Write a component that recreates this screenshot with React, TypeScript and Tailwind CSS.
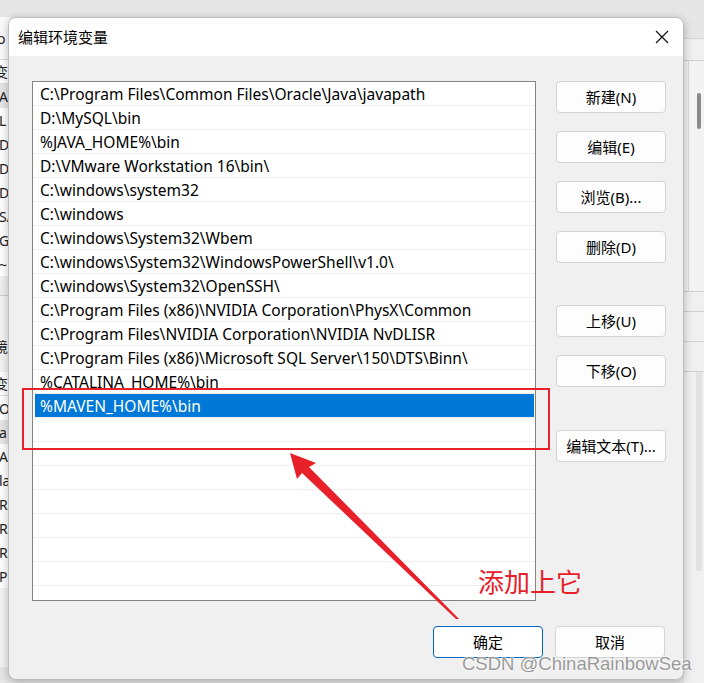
import React from "react";

const paths = [
  "C:\\Program Files\\Common Files\\Oracle\\Java\\javapath",
  "D:\\MySQL\\bin",
  "%JAVA_HOME%\\bin",
  "D:\\VMware Workstation 16\\bin\\",
  "C:\\windows\\system32",
  "C:\\windows",
  "C:\\windows\\System32\\Wbem",
  "C:\\windows\\System32\\WindowsPowerShell\\v1.0\\",
  "C:\\windows\\System32\\OpenSSH\\",
  "C:\\Program Files (x86)\\NVIDIA Corporation\\PhysX\\Common",
  "C:\\Program Files\\NVIDIA Corporation\\NVIDIA NvDLISR",
  "C:\\Program Files (x86)\\Microsoft SQL Server\\150\\DTS\\Binn\\",
  "%CATALINA_HOME%\\bin",
  "%MAVEN_HOME%\\bin",
];

const font = { fontFamily: '"Noto Sans", "Noto Sans CJK SC", sans-serif' };

function Btn({ label, primary }: { label: string; primary?: boolean }) {
  return (
    <div
      className={
        "w-[110px] h-[32px] rounded-[4px] flex items-center justify-center text-[15px] text-black " +
        (primary ? "bg-white border border-[#0067c0]" : "bg-[#fdfdfd] border border-[#d4d4d4]")
      }
    >
      {label}
    </div>
  );
}

const leftA = ["AP", "L", "DA", "DA", "DE", "SA", "GC", "~"];
const leftB = ["OS", "a", "A", "la", "R", "R", "R", "P"];

export default function App() {
  const rows = Array.from({ length: 22 }, (_, i) => paths[i] ?? "");
  return (
    <div className="relative w-[704px] h-[683px] overflow-hidden bg-[#e6e6e6]" style={font}>
      {/* background window fragments, left */}
      <div className="absolute left-0 top-[17px] w-[10px] h-[650px] overflow-hidden bg-[#f3f3f3] text-[14px] text-[#222]">
        <div className="h-[43px] bg-[#fafafa] border-b border-[#d8d8d8] flex items-center -ml-[3px]">o</div>
        <div className="h-[24px] flex items-center -ml-[6px] border-b border-[#e0e0e0] bg-white">变</div>
        <div className="bg-white">
          {leftA.map((t, i) => (
            <div key={i} className={"h-[24px] flex items-center -ml-[1px] " + (i === 0 ? "bg-[#e5e5e5]" : "")}>{t}</div>
          ))}
        </div>
        <div className="h-[20px] bg-[#f0f0f0] border-b border-[#d0d0d0]" />
        <div className="h-[38px]" />
        <div className="h-[24px] flex items-center -ml-[6px]">境</div>
        <div className="h-[14px]" />
        <div className="h-[24px] flex items-center -ml-[6px] bg-white border-b border-[#e0e0e0]">变</div>
        <div className="bg-white">
          {leftB.map((t, i) => (
            <div key={i} className={"h-[24px] flex items-center -ml-[1px] " + (i === 1 ? "bg-[#e5e5e5]" : "")}>{t}</div>
          ))}
        </div>
      </div>

      {/* background window fragments, right */}
      <div className="absolute left-[684px] top-[38px] w-[20px] h-[645px] bg-[#f0f0f0] border-t border-[#d6d6d6]">
        <div className="h-[22px] border-b border-[#d0d0d0]" />
        <div className="flex h-[230px]">
          <div className="w-[4px]" />
          <div className="w-[6px] bg-[#f7f7f7] border-l border-[#dcdcdc]" />
          <div className="w-[10px] bg-[#f3f3f3] pt-[32px] pl-[3px]">
            <div className="w-[4px] h-[36px] bg-[#8a8a8a] rounded-sm" />
          </div>
        </div>
        <div className="h-[20px] border-t border-[#d0d0d0]" />
        <div className="h-[30px] border-t border-[#d0d0d0]" />
        <div className="h-[30px] border-t border-[#d0d0d0]" />
        <div className="h-[200px] border-t border-[#d0d0d0] flex">
          <div className="w-[12px]" />
          <div className="w-[6px] bg-[#e2e2e2]" />
        </div>
      </div>

      {/* dialog window */}
      <div className="absolute left-[8px] top-[17px] w-[676px] h-[663px] rounded-[8px] overflow-hidden bg-[#f0f0f0] shadow-[0_2px_10px_rgba(0,0,0,0.25)] border border-[#bdbdbd]">
        <div className="h-[38px] bg-white flex items-center justify-between pl-[9px] pr-[14px]">
          <span className="text-[15px] text-black">编辑环境变量</span>
          <svg width="14" height="14" viewBox="0 0 14 14">
            <path d="M1 1 L13 13 M13 1 L1 13" stroke="#111" strokeWidth="1.2" fill="none" />
          </svg>
        </div>
        <div className="flex pl-[23px] pt-[25px]">
          <div className="w-[504px] h-[520px] bg-white border border-[#848484] overflow-hidden">
            {rows.map((t, i) => {
              const sel = i === 13;
              return (
                <div key={i} className="h-[24px] border-b border-[#efefef] flex">
                  <div
                    className={
                      "flex-1 flex items-center pt-[2px] text-[15.5px] whitespace-nowrap " +
                      (sel ? "bg-[#0078d7] text-white ml-[2px] mr-[1px] pl-[5px]" : "text-black pl-[7px]")
                    }
                  >
                    {t}
                  </div>
                </div>
              );
            })}
          </div>
          <div className="ml-[20px] flex flex-col">
            <div className="flex flex-col gap-[18px]">
              <Btn label="新建(N)" />
              <Btn label="编辑(E)" />
              <Btn label="浏览(B)..." />
              <Btn label="删除(D)" />
            </div>
            <div className="flex flex-col gap-[18px] mt-[42px]">
              <Btn label="上移(U)" />
              <Btn label="下移(O)" />
            </div>
            <div className="mt-[43px]">
              <Btn label="编辑文本(T)..." />
            </div>
          </div>
        </div>
        <div className="flex justify-end gap-[12px] pr-[18px] mt-[25px]">
          <Btn label="确定" primary />
          <Btn label="取消" />
        </div>
      </div>

      {/* annotation: red box */}
      <div className="absolute left-[22px] top-[388px] w-[528px] h-[62px] border-2 border-[#e8202a]" />

      {/* annotation: arrow */}
      <svg className="absolute left-0 top-0" width="704" height="683" viewBox="0 0 704 683">
        <polygon
          points="290,453 316,463 309,467 459,619 456,619 302,473 297,479"
          fill="#e8202a"
        />
      </svg>

      {/* annotation text */}
      <div
        className="absolute left-[478px] top-[568px] text-[26px] leading-none text-[#e8202a]"
        style={{ fontFamily: '"Noto Sans CJK SC", sans-serif' }}
      >
        添加上它
      </div>

      {/* watermark */}
      <div
        className="absolute left-[462px] top-[655px] text-[18.5px] leading-none text-[#9a9a9a] [text-shadow:0_0_2px_#fff,0_0_2px_#fff]"
        style={{ fontFamily: '"Liberation Sans", Arial, sans-serif' }}
      >
        CSDN @ChinaRainbowSea
      </div>
    </div>
  );
}
